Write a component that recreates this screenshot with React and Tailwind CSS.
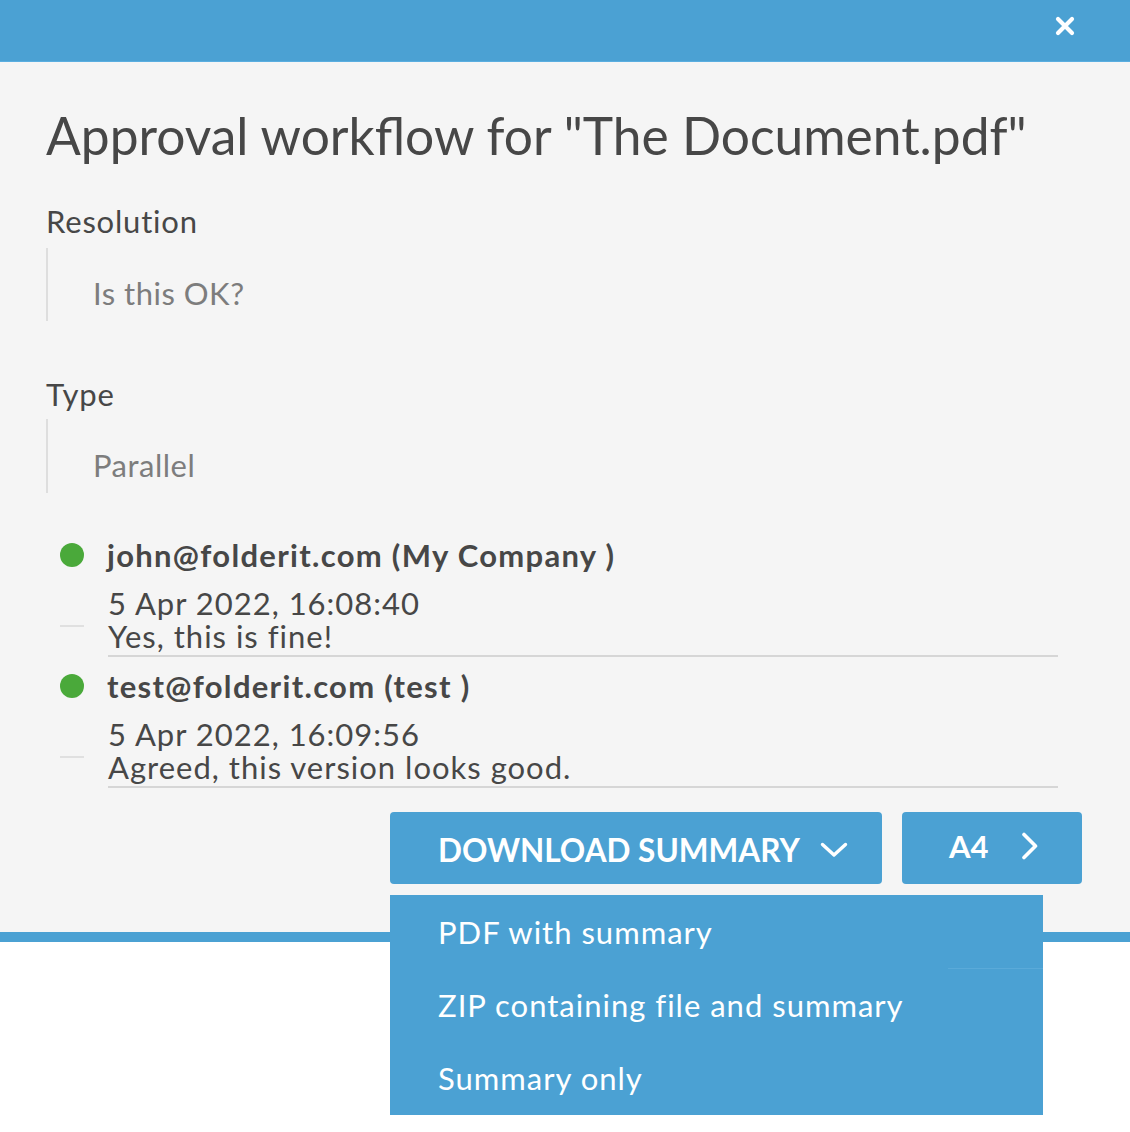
import React from "react";

const approvals = [
  { email: "john@folderit.com (My Company )", date: "5 Apr 2022, 16:08:40", comment: "Yes, this is fine!" },
  { email: "test@folderit.com (test )", date: "5 Apr 2022, 16:09:56", comment: "Agreed, this version looks good." },
];

export default function App() {
  return (
    <div className="relative w-[1130px] h-[1132px] bg-white font-['Lato',sans-serif] text-[#474747]">
      <div className="h-[62px] bg-[#4ba1d3] border-b border-[#5aaee0] flex items-start justify-end pr-[55px] pt-[16px]">
        <svg width="20" height="20" viewBox="0 0 20 20">
          <path d="M3 3 L17 17 M17 3 L3 17" stroke="white" strokeWidth="4.2" strokeLinecap="round" />
        </svg>
      </div>
      <div className="h-[880px] bg-[#f5f5f5] border-b-[10px] border-[#4ba1d3] pl-[46px] pt-[46px]">
        <h1 className="text-[51.5px] leading-[54px] font-normal text-[#474747]">
          Approval workflow for "The Document.pdf"
        </h1>

        <div className="mt-[44px] text-[31px] leading-[30px] tracking-[0.8px]">Resolution</div>
        <div className="mt-[12px] border-l-2 border-[#dedede] h-[73px] pl-[45px] pt-[30px] text-[31px] leading-[31px] tracking-[0.5px] text-[#7d7d7d]">
          Is this OK?
        </div>

        <div className="mt-[58px] text-[31px] leading-[30px] tracking-[0.8px]">Type</div>
        <div className="mt-[10px] border-l-2 border-[#dedede] h-[74px] pl-[45px] pt-[31px] text-[31px] leading-[31px] tracking-[0.5px] text-[#7d7d7d]">
          Parallel
        </div>

        <div className="mt-[48px] pl-[14px] pr-[72px] flex flex-col gap-[15px]">
          {approvals.map((a) => (
            <div key={a.email} className="flex flex-col">
              <div className="flex items-center h-[28px]">
                <span className="w-[24px] h-[24px] rounded-full bg-[#4aa93a] shrink-0" />
                <span className="ml-[23px] text-[31px] leading-[30px] font-bold tracking-[1.3px] text-[#474747]">{a.email}</span>
              </div>
              <div className="flex items-center mt-[18px]">
                <span className="w-[24px] h-[2px] bg-[#e0e0e0] shrink-0 mt-[8px]" />
                <div className="ml-[24px] flex-1 border-b-2 border-[#d6d6d6] pb-[2px]">
                  <div className="text-[31px] leading-[33px] tracking-[1px]">{a.date}</div>
                  <div className="text-[31px] leading-[33px] tracking-[1px]">{a.comment}</div>
                </div>
              </div>
            </div>
          ))}
        </div>

        <div className="mt-[24px] flex justify-end gap-[20px] pr-[48px]">
          <button className="w-[492px] h-[72px] rounded-[4px] bg-[#4ba1d3] text-white flex items-center pl-[48px]">
            <span className="text-[31.5px] leading-[32px] font-bold mt-[4px]">DOWNLOAD SUMMARY</span>
            <svg className="ml-[20px] mt-[4px]" width="28" height="16" viewBox="0 0 28 16">
              <path d="M2.5 2.5 L14 13 L25.5 2.5" fill="none" stroke="white" strokeWidth="3.4" strokeLinecap="round" strokeLinejoin="round" />
            </svg>
          </button>
          <button className="w-[180px] h-[72px] rounded-[4px] bg-[#4ba1d3] text-white flex items-center pl-[47px] pb-[4px]">
            <span className="text-[31px] leading-[30px] font-bold">A4</span>
            <svg className="ml-[32px]" width="18" height="28" viewBox="0 0 18 28">
              <path d="M3 2.5 L14.5 14 L3 25.5" fill="none" stroke="white" strokeWidth="3.6" strokeLinecap="round" strokeLinejoin="round" />
            </svg>
          </button>
        </div>
      </div>

      <div className="absolute left-[390px] top-[895px] w-[653px] h-[220px] bg-[#4ba1d3] text-white flex flex-col">
        <div className="absolute left-[558px] top-[73px] w-[95px] h-[1px] bg-[#5aaad9]" />
        <div className="h-[73px] flex items-center pl-[48px] text-[31px] leading-[30px] tracking-[1px]">PDF with summary</div>
        <div className="h-[73px] flex items-center pl-[48px] text-[31px] leading-[30px] tracking-[1px]">ZIP containing file and summary</div>
        <div className="h-[73px] flex items-center pl-[48px] text-[31px] leading-[30px] tracking-[1px]">Summary only</div>
      </div>
    </div>
  );
}
